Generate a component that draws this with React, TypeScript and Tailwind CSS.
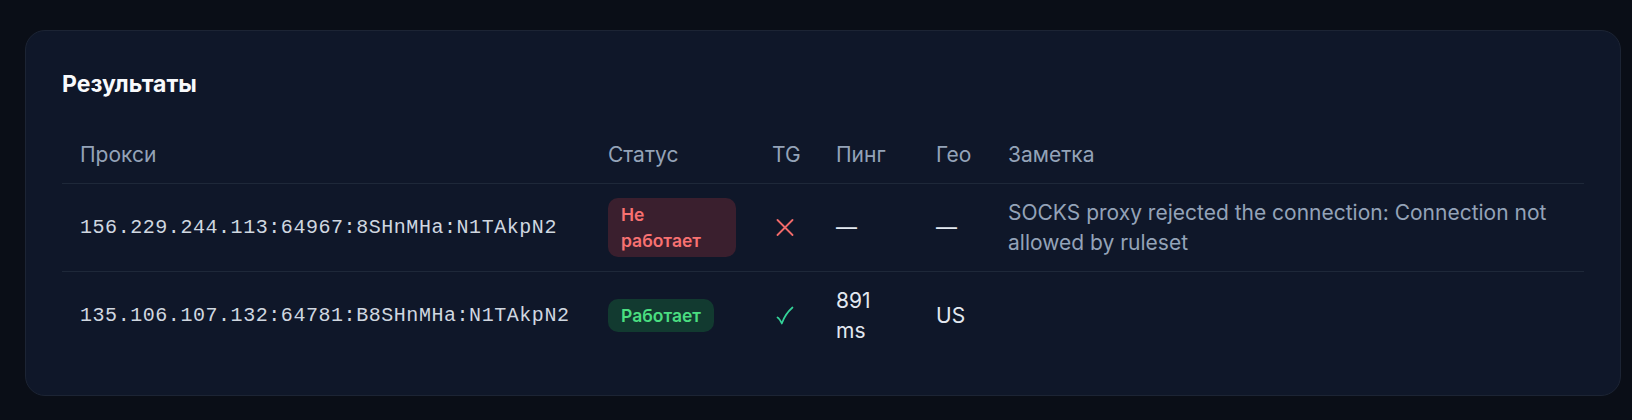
const cols = [528, 164, 64, 100, 72, 594];

const headers = ['Прокси', 'Статус', 'TG', 'Пинг', 'Гео', 'Заметка'];

type Row = {
  proxy: string;
  ok: boolean;
  ping: string;
  geo: string;
  note: string;
};

const rows: Row[] = [
  {
    proxy: '156.229.244.113:64967:8SHnMHa:N1TAkpN2',
    ok: false,
    ping: '—',
    geo: '—',
    note: 'SOCKS proxy rejected the connection: Connection not allowed by ruleset',
  },
  {
    proxy: '135.106.107.132:64781:B8SHnMHa:N1TAkpN2',
    ok: true,
    ping: '891 ms',
    geo: 'US',
    note: '',
  },
];

function StatusBadge({ ok }: { ok: boolean }) {
  return ok ? (
    <span className="inline-block rounded-[10px] bg-[#123a30] px-[13px] py-[3.5px] text-[17.5px] leading-[26px] font-semibold text-[#4ade80]">
      Работает
    </span>
  ) : (
    <span className="inline-block rounded-[10px] bg-[#3a1f2e] px-[13px] py-[3.5px] text-[17.5px] leading-[26px] font-semibold text-[#f87171]">
      Не работает
    </span>
  );
}

function TgMark({ ok }: { ok: boolean }) {
  if (ok) {
    return (
      <svg width="18" height="19" viewBox="0 0 18 19" className="ml-[4px] text-[#34d399]">
        <path d="M1.5 11.5 Q3.5 12.5 5.8 17.5 Q9 8 16.5 1.5" fill="none" stroke="currentColor" strokeWidth="1.7" strokeLinecap="round" strokeLinejoin="round" />
      </svg>
    );
  }
  return (
    <svg width="18" height="17" viewBox="0 0 18 17" className="ml-[4px] text-[#f06a6a]">
      <path d="M1.5 1 L16.5 16 M16.5 1 L1.5 16" fill="none" stroke="currentColor" strokeWidth="1.8" strokeLinecap="round" />
    </svg>
  );
}

export default function App() {
  return (
    <div className="min-h-[420px] w-full bg-[#0a0e17] pt-[30px] font-['Inter','Noto_Sans',sans-serif]">
      <div className="ml-[25px] w-[1596px] rounded-[20px] border border-[#1c2434] bg-[#0f1729] p-[36px]">
        <h2 className="mb-[25px] text-[23px] leading-[35px] font-bold text-[#f8fafc]">Результаты</h2>

        <table className="w-full table-fixed border-collapse text-[21px] leading-[30px]">
          <colgroup>
            {cols.map((w, i) => (
              <col key={i} style={{ width: w }} />
            ))}
          </colgroup>
          <thead>
            <tr className="border-b border-[#1e2839]">
              {headers.map((h) => (
                <th key={h} className="px-[18px] py-[13px] text-left font-normal text-[#94a3b8]">
                  {h}
                </th>
              ))}
            </tr>
          </thead>
          <tbody>
            {rows.map((r, i) => (
              <tr key={r.proxy} className={i < rows.length - 1 ? 'border-b border-[#1e2839]' : ''}>
                <td className="px-[18px] py-[13.5px] align-middle font-['Liberation_Mono',monospace] text-[20px] tracking-[0.55px] text-[#d0d7e0]">
                  {r.proxy}
                </td>
                <td className="px-[18px] py-[13.5px] align-middle">
                  <StatusBadge ok={r.ok} />
                </td>
                <td className="px-[18px] py-[13.5px] align-middle">
                  <TgMark ok={r.ok} />
                </td>
                <td className="px-[18px] py-[13.5px] align-middle text-[#e2e8f0]">{r.ping}</td>
                <td className="px-[18px] py-[13.5px] align-middle text-[#e2e8f0]">{r.geo}</td>
                <td className="px-[18px] py-[13.5px] align-middle text-[#94a3b8]">{r.note}</td>
              </tr>
            ))}
          </tbody>
        </table>
      </div>
    </div>
  );
}
